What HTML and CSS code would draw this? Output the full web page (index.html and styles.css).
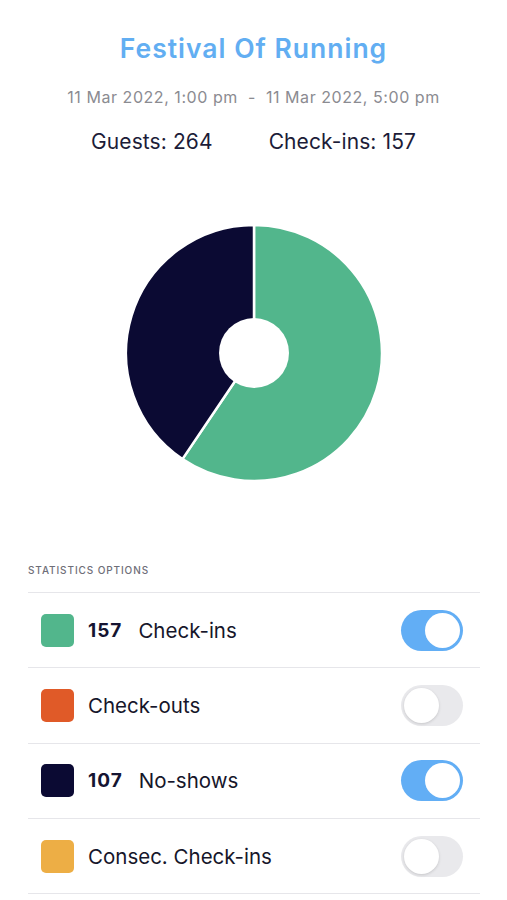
FILE: index.html
```html
<!DOCTYPE html>
<html>
<head>
<meta charset="utf-8">
<link rel="stylesheet" href="styles.css">
</head>
<body>
<div class="page">
  <header class="event">
    <h1 class="title">Festival Of Running</h1>
    <div class="dates">11 Mar 2022, 1:00 pm&nbsp;&nbsp;-&nbsp;&nbsp;11 Mar 2022, 5:00 pm</div>
    <div class="counts"><span>Guests: 264</span><span>Check-ins: 157</span></div>
  </header>
  <div class="chart">
    <svg width="260" height="260" viewBox="-130 -130 260 260">
      <path d="M0,-128 A128,128 0 1 1 -71.58,106.12 L0,0 Z" fill="#52B68C" stroke="#fff" stroke-width="2.5" stroke-linejoin="round"/>
      <path d="M-71.58,106.12 A128,128 0 0 1 0,-128 L0,0 Z" fill="#0B0A33" stroke="#fff" stroke-width="2.5" stroke-linejoin="round"/>
      <circle cx="0" cy="0" r="35" fill="#fff"/>
    </svg>
  </div>
  <section class="stats">
    <div class="stats-head">STATISTICS OPTIONS</div>
    <ul class="options">
      <li class="option">
        <span class="swatch green"></span>
        <span class="num">157</span><span class="label">Check-ins</span>
        <span class="toggle on"><span class="knob"></span></span>
      </li>
      <li class="option">
        <span class="swatch orange"></span>
        <span class="label">Check-outs</span>
        <span class="toggle"><span class="knob"></span></span>
      </li>
      <li class="option">
        <span class="swatch navy"></span>
        <span class="num">107</span><span class="label">No-shows</span>
        <span class="toggle on"><span class="knob"></span></span>
      </li>
      <li class="option">
        <span class="swatch yellow"></span>
        <span class="label">Consec. Check-ins</span>
        <span class="toggle"><span class="knob"></span></span>
      </li>
    </ul>
  </section>
</div>
</body>
</html>
```
FILE: styles.css
```css
* { box-sizing: border-box; }
html, body { margin: 0; padding: 0; background: #fff; }
body { font-family: Inter, Lato, sans-serif; color: #1b1b36; }
.page { width: 507px; height: 900px; overflow: hidden; }
.event { display: flex; flex-direction: column; align-items: center; padding-top: 30px; }
.title { margin: 0; font-size: 26.5px; font-weight: 600; color: #62AEF2; line-height: 36px; letter-spacing: 1px; }
.dates { margin-top: 21px; font-size: 16px; color: #8b8b91; line-height: 20px; letter-spacing: 0.55px; font-weight: 400; }
.counts { margin-top: 22px; display: flex; gap: 56px; font-size: 21px; color: #1c1c38; line-height: 26px; letter-spacing: 0.1px; }
.chart { display: flex; justify-content: center; margin-top: 68px; }
.chart svg { display: block; margin-left: 1px; }
.stats { margin-top: 81px; padding: 0 27px 0 28px; }
.stats-head { font-size: 10px; letter-spacing: 0.9px; color: #6e6e78; padding-bottom: 16px; font-weight: 500; line-height: 12px; }
.options { list-style: none; margin: 0; padding: 0; border-bottom: 1px solid #e6e6ea; }
.option { display: flex; align-items: center; height: 75.3px; border-top: 1px solid #e6e6ea; padding: 0 17px 0 13px; }
.swatch { width: 33px; height: 33px; border-radius: 5px; flex: none; margin-right: 14px; }
.green { background: #52B68C; }
.orange { background: #E05A28; }
.navy { background: #0B0A33; }
.yellow { background: #EDAE45; }
.num { font-weight: 700; font-size: 19px; color: #151432; margin-right: 16px; letter-spacing: 1px; }
.label { font-size: 20.5px; color: #16162a; }
.toggle { margin-left: auto; width: 62px; height: 41px; border-radius: 21px; background: #e9e9ec; position: relative; flex: none; }
.toggle .knob { position: absolute; top: 3px; left: 3px; width: 35px; height: 35px; border-radius: 50%; background: #fff; box-shadow: 0 1px 3px rgba(0,0,0,0.15); }
.toggle.on { background: #62AEF5; }
.toggle.on .knob { left: 24px; box-shadow: none; }
```
